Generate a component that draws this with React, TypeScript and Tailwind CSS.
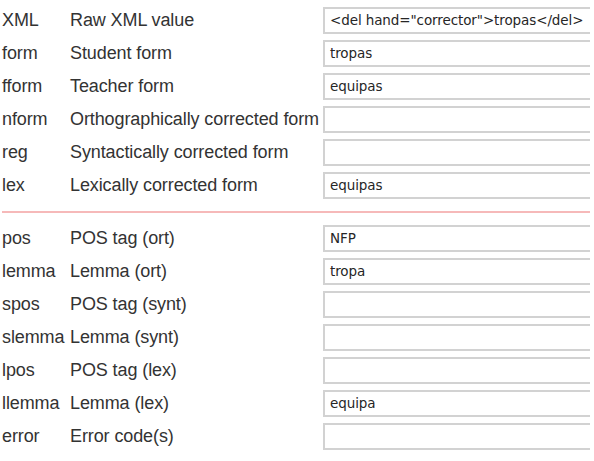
const top = [
  { key: "XML", label: "Raw XML value", value: '<del hand="corrector">tropas</del>' },
  { key: "form", label: "Student form", value: "tropas" },
  { key: "fform", label: "Teacher form", value: "equipas" },
  { key: "nform", label: "Orthographically corrected form", value: "" },
  { key: "reg", label: "Syntactically corrected form", value: "" },
  { key: "lex", label: "Lexically corrected form", value: "equipas" },
];

const bottom = [
  { key: "pos", label: "POS tag (ort)", value: "NFP" },
  { key: "lemma", label: "Lemma (ort)", value: "tropa" },
  { key: "spos", label: "POS tag (synt)", value: "" },
  { key: "slemma", label: "Lemma (synt)", value: "" },
  { key: "lpos", label: "POS tag (lex)", value: "" },
  { key: "llemma", label: "Lemma (lex)", value: "equipa" },
  { key: "error", label: "Error code(s)", value: "" },
];

type Row = { key: string; label: string; value: string };

function Field({ row }: { row: Row }) {
  return (
    <div className="grid h-[33px] grid-cols-[70px_253px_267px] items-center">
      <span className="pl-[2px] whitespace-nowrap">{row.key}</span>
      <span className="whitespace-nowrap">{row.label}</span>
      <div className="flex h-[27px] items-center overflow-hidden whitespace-nowrap border-2 border-r-0 border-[#d2d2d2] bg-white pl-[5px] font-['DejaVu_Sans',sans-serif] text-[13.5px] text-[#262626]">
        {row.value}
      </div>
    </div>
  );
}

export default function App() {
  return (
    <main className="min-h-screen bg-white pt-[4px] font-['Liberation_Sans',Arial,sans-serif] text-[18px] tracking-[-0.1px] text-[#333]">
      <div className="flex flex-col">
        {top.map((r) => (
          <Field key={r.key} row={r} />
        ))}
      </div>
      <div className="my-[9px] ml-[2px] h-[2px] w-[588px] bg-[#f6b9b9]" />
      <div className="flex flex-col">
        {bottom.map((r) => (
          <Field key={r.key} row={r} />
        ))}
      </div>
    </main>
  );
}
